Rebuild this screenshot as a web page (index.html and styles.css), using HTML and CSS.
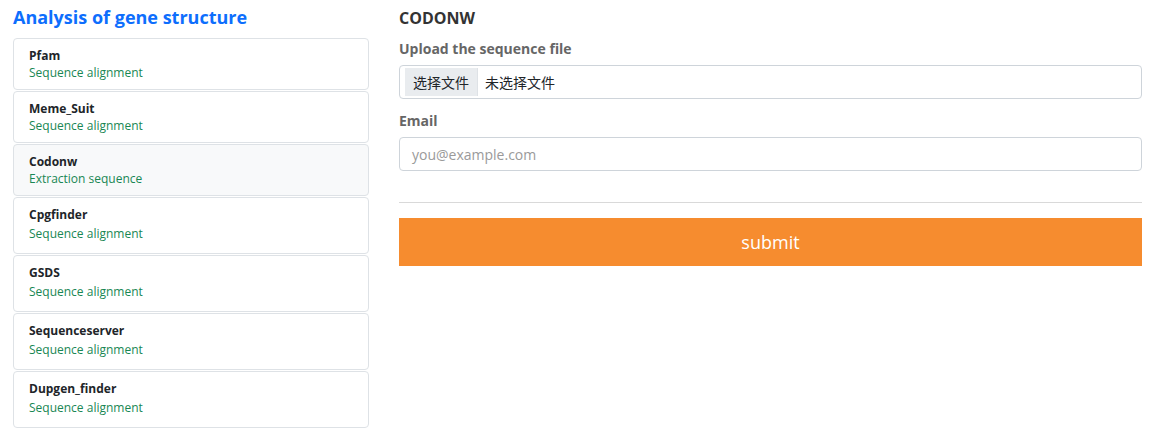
FILE: index.html
```html
<!DOCTYPE html>
<html lang="en">
<head>
<meta charset="utf-8">
<title>CODONW</title>
<link rel="stylesheet" href="styles.css">
</head>
<body>
<div class="page">
  <aside class="sidebar">
    <h2 class="side-title">Analysis of gene structure</h2>
    <div class="tool-list">
      <a class="tool">
        <div class="tool-name">Pfam</div>
        <div class="tool-desc">Sequence alignment</div>
      </a>
      <a class="tool">
        <div class="tool-name">Meme_Suit</div>
        <div class="tool-desc">Sequence alignment</div>
      </a>
      <a class="tool active">
        <div class="tool-name">Codonw</div>
        <div class="tool-desc">Extraction sequence</div>
      </a>
      <a class="tool tall">
        <div class="tool-name">Cpgfinder</div>
        <div class="tool-desc">Sequence alignment</div>
      </a>
      <a class="tool tall">
        <div class="tool-name">GSDS</div>
        <div class="tool-desc">Sequence alignment</div>
      </a>
      <a class="tool tall">
        <div class="tool-name">Sequenceserver</div>
        <div class="tool-desc">Sequence alignment</div>
      </a>
      <a class="tool tall">
        <div class="tool-name">Dupgen_finder</div>
        <div class="tool-desc">Sequence alignment</div>
      </a>
    </div>
  </aside>
  <main class="content">
    <h3 class="form-title">CODONW</h3>
    <div class="field field-file">
      <div class="label">Upload the sequence file</div>
      <div class="file-box">
        <span class="file-btn">选择文件</span>
        <span class="file-name">未选择文件</span>
      </div>
    </div>
    <div class="field field-email">
      <div class="label">Email</div>
      <div class="text-box"><span class="placeholder">you@example.com</span></div>
    </div>
    <hr class="divider">
    <div class="submit">submit</div>
  </main>
</div>
</body>
</html>
```
FILE: styles.css
```css
html, body {
  margin: 0;
  padding: 0;
  background: #fff;
}
body {
  font-family: "Open Sans", "Noto Sans CJK SC", sans-serif;
  color: #212529;
}
.page {
  display: flex;
  gap: 30px;
  padding: 0 14px 0 13px;
}
.sidebar {
  width: 356px;
  flex: none;
}
.side-title {
  margin: 5px 0 9px;
  font-size: 18px;
  line-height: 24px;
  font-weight: 700;
  color: #0d6efd;
}
.tool-list {
  display: flex;
  flex-direction: column;
  gap: 1px;
}
.tool {
  display: block;
  border: 1px solid #dee2e6;
  border-radius: 4px;
  padding: 8px 15px 8px 15px;
  background: #fff;
}
.tool.active {
  background: #f8f9fa;
}
.tool.tall {
  padding-bottom: 11px;
}
.tool.tall .tool-desc {
  margin-top: 2px;
}
.tool-name {
  font-size: 12px;
  line-height: 17px;
  font-weight: 700;
  color: #212529;
}
.tool-desc {
  font-size: 12px;
  line-height: 17px;
  color: #198754;
}
.content {
  flex: 1;
  min-width: 0;
}
.form-title {
  margin: 7px 0 0;
  font-size: 16px;
  line-height: 22px;
  font-weight: 700;
  color: #333;
}
.field-file {
  margin-top: 10px;
}
.field-email {
  margin-top: 12px;
}
.label {
  font-size: 14px;
  line-height: 20px;
  font-weight: 700;
  color: #666;
  margin-bottom: 6px;
}
.file-box, .text-box {
  display: flex;
  align-items: center;
  height: 34px;
  box-sizing: border-box;
  border: 1px solid #ced4da;
  border-radius: 4px;
  font-size: 14px;
}
.file-box {
  padding: 2px 5px;
}
.file-btn {
  display: flex;
  align-items: center;
  height: 28px;
  padding: 0 8px;
  background: #e9ecef;
  border-right: 1px solid #dee2e6;
  color: #212529;
  font-family: "Noto Sans CJK SC", sans-serif;
}
.file-name {
  margin-left: 7px;
  color: #212529;
  font-family: "Noto Sans CJK SC", sans-serif;
}
.text-box {
  padding: 0 12px;
}
.placeholder {
  color: #9a9a9a;
  font-size: 14px;
}
.divider {
  margin: 31px 0 15px;
  border: 0;
  border-top: 1px solid #d9d9d9;
}
.submit {
  height: 48px;
  display: flex;
  align-items: center;
  justify-content: center;
  background: #f68c2f;
  color: #fff;
  font-size: 18px;
}
```
